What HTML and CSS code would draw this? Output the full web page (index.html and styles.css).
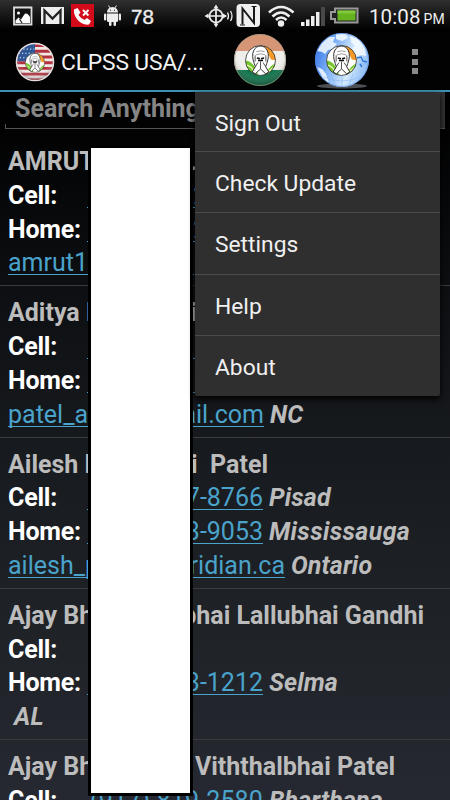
FILE: index.html
```html
<!DOCTYPE html>
<html lang="en">
<head>
<meta charset="utf-8">
<title>CLPSS USA</title>
<link rel="stylesheet" href="styles.css">
</head>
<body>
<svg width="0" height="0" class="defs" aria-hidden="true">
  <defs>
    <clipPath id="disc"><circle cx="30" cy="30" r="26"/></clipPath>
    <clipPath id="inner"><circle cx="15" cy="15" r="14.5"/></clipPath>
    <radialGradient id="gloss" cx=".5" cy=".35" r=".65">
      <stop offset=".65" stop-color="#fff" stop-opacity="0"/><stop offset="1" stop-color="#222" stop-opacity=".4"/>
    </radialGradient>
    <linearGradient id="sea" x1="0" y1=".35" x2="1" y2=".65">
      <stop offset="0" stop-color="#3b78ea"/><stop offset=".3" stop-color="#7db0f6"/><stop offset=".65" stop-color="#d5eafd"/><stop offset="1" stop-color="#86b8f4"/>
    </linearGradient>
    <symbol id="emblem" viewBox="0 0 30 30">
      <g clip-path="url(#inner)">
        <path fill="#fff" d="M0 0h30v30H0z"/>
        <path fill="#f49a28" d="M0 11C3 5 7 1 12 0H0zM18 0h12v15l-5-1z"/>
        <path fill="#74c52f" d="M0 15q9 0 13 15H0zM30 18q-6 1-11 12h11z"/>
        <path d="M0 19q7 1 10 9M30 21q-6 2-9 8" fill="none" stroke="#eaf5b0" stroke-width="1.3"/>
      </g>
      <circle cx="15" cy="15" r="14.5" fill="none" stroke="#333" stroke-width=".8"/>
      <path d="M9 18C5 8 9 1 15 1s10 7 6 17l-1 3 3 5-3 2-4-4-1-1-1 1-4 4-3-2 3-5z" fill="#fff" stroke="#222" stroke-width=".9"/>
      <path d="M10.500 9.500q4.500-2 9 0M11 6.500q4-1.500 8 0" fill="none" stroke="#777" stroke-width=".7"/>
      <path d="M11.500 12.500l3 .8M18.500 12.500l-3 .8M12.500 15h5" fill="none" stroke="#111" stroke-width="1.500"/>
      <path d="M15 16v7M12.500 17l-2.500 4M17.500 17l2.500 4M9.800 10v6M20.200 10v6" fill="none" stroke="#333" stroke-width=".8"/>
    </symbol>
  </defs>
</svg>
<div class="screen">
  <header class="status">
    <svg class="status-left" width="122" height="33" viewBox="0 0 122 33">
      <path d="M14 7.500h17.500v17H14z" fill="#111" stroke="#ddd" stroke-width="1.800"/>
      <circle cx="18.500" cy="13" r="1.500" fill="#fff"/>
      <path d="M15.500 23v-2.500l3-3 2.500 2 3-4.500c2-3 4-1 6 2v6z" fill="#fff"/><path d="M22 23l-2.500-4" stroke="#222" stroke-width="1.200"/>
      <path d="M41 7h23v17H41z" fill="#eee"/><path d="M44.500 24V10.500l8 8 8-8V24" fill="none" stroke="#222" stroke-width="2.300"/>
      <path d="M71 4h23v23H71z" fill="#d20a19"/>
      <path d="M74 9.500l3.500-1.500 3 4.500-2 2.500q2.500 4 6 5l2.500-2 4 3-2 3.500C81 26 73 17 74 9.500z" fill="#fff"/>
      <path d="M83 10l5.500 5.500M88.500 10L83 15.500" stroke="#fff" stroke-width="1.900"/>
      <g fill="#eee"><path d="M107 12.500a5.500 5.500 0 0 1 11 0z"/><path d="M107 13.500h11v7q0 1.500-1.500 1.500h-8q-1.500 0-1.500-1.500z"/><rect x="104" y="13.500" width="2.300" height="7" rx="1.100"/><rect x="118.700" y="13.500" width="2.300" height="7" rx="1.100"/><rect x="109" y="20" width="2.500" height="6" rx="1.200"/><rect x="113.500" y="20" width="2.500" height="6" rx="1.200"/></g>
      <path d="M108.500 5.500l2 3M116.500 5.500l-2 3" stroke="#eee"/><path d="M110 10.200h1M114 10.200h1" stroke="#111"/>
    </svg>
    <span class="count">78</span>
    <svg class="status-right" width="160" height="33" viewBox="204 0 160 33">
      <g fill="none" stroke="#eee" stroke-width="1.700"><circle cx="216" cy="16" r="6.500"/><path d="M206 16h20M216 6v20"/><path d="M227.500 12.500q2 3.500 0 7M230.500 11q3 5 0 10" stroke-width="1.300"/></g>
      <path d="M216 4.500l-2.500 4h5zM216 27.500l-2.500-4h5zM204.500 16l4-2.500v5zM227 16l-4-2.500v5z" fill="#eee"/>
      <rect x="236.500" y="4" width="23.500" height="23" rx="4" fill="#f0f0f0"/>
      <path d="M242.500 24.500V8.500l11.500 14.500V7" fill="none" stroke="#181818" stroke-width="2"/>
      <path d="M240 25h5M251.500 6.500h5" stroke="#181818" stroke-width="1.200"/>
      <g fill="none" stroke="#eee" stroke-width="2.600"><path d="M269 12.500q12-11 24.500 0M272.500 16.500q8.500-8 17 0M276 20q5-5 10.500 0"/></g><circle cx="281" cy="23.500" r="3.200" fill="#eee"/>
      <path d="M301 22h3.500v4H301zM306 19.500h3.500V26H306zM311 16h3.500v10H311zM316 12h3.500v14H316z" fill="#eee"/><path d="M321 7h4v19h-4z" fill="#484848"/>
      <path d="M335 8.500h22.500v14H335v-3.500h-4V12h4z" fill="#222" stroke="#999" stroke-width="2"/><path d="M337.500 10.500h18v10h-18z" fill="#65b31f"/><path d="M337.500 10.500h18v3h-18z" fill="#82c83f"/>
    </svg>
    <span class="clock">10:08<small>PM</small></span>
  </header>

  <div class="actionbar">
    <svg class="logo" width="40" height="40" viewBox="2 2 56 56">
      <g clip-path="url(#disc)"><path fill="#f2e9e7" d="M0 0h60v60H0z"/><path d="M0 7h60M0 15h60M0 23h60M0 31h60M0 39h60M0 47h60M0 55h60" stroke="#b3313e" stroke-width="4"/><path fill="#2f5795" d="M0 0h30v29H0z"/><path d="M9 12h20M7 18h22M4 24h24" stroke="#c4d4ec" stroke-width="1.700" stroke-dasharray="1.700 3"/></g>
      <circle cx="30" cy="30" r="26" fill="url(#gloss)" stroke="#e8dedd" stroke-width="2"/>
      <use href="#emblem" x="16" y="17" width="28" height="28"/>
    </svg>
    <h1 class="app-title">CLPSS USA/...</h1>
    <svg class="badge-india" width="60" height="57" viewBox="0 3 60 57">
      <g clip-path="url(#disc)"><path fill="#d69575" d="M0 0h60v22H0z"/><path fill="#f0eeeb" d="M0 21h60v19H0z"/><path fill="#087046" d="M0 40h60v20H0z"/></g>
      <circle cx="30" cy="30" r="25.500" fill="url(#gloss)" stroke="#a79a86" stroke-opacity=".7"/>
      <use href="#emblem" x="15" y="15" width="31" height="31"/>
    </svg>
    <svg class="badge-globe" width="60" height="57" viewBox="0 3 60 57">
      <ellipse cx="31" cy="56" rx="25" ry="2.500" fill="#4c5054"/>
      <circle cx="31" cy="30" r="27" fill="url(#sea)"/>
      <path d="M6 21l5-8 7-6 6 0-2 5 4 2-5 5-4 1-3 4-3-2zM25 4l10 0 2 4-6 3-6-2zM39 6l9 4 6 9 1 7-5-1-6 2-3-8 3-3-4-4zM6 37l5 2 4 5 3 9-6-5z" fill="#f4faff" opacity=".85"/>
      <path d="M13 47q18 8 36 0M31 46v11M20 44l4 11M42 44l-4 11M46 34h11" fill="none" stroke="#7bb2ee" stroke-opacity=".5"/>
      <path d="M46 28l4-1 2 4 4 1M49 34l2 3" fill="none" stroke="#2f78dc" stroke-width="1.500"/>
      <circle cx="31" cy="30" r="26.500" fill="none" stroke="#5c91e6" stroke-opacity=".7"/>
      <use href="#emblem" x="15" y="15" width="31" height="31"/>
    </svg>
    <div class="overflow"><i></i><i></i><i></i></div>
  </div>

  <main class="content">
    <div class="search"><span>Search Anything</span></div>
    <section class="contact">
      <div class="line name"><span class="split w-dot"><span>AMRUT</span><span>.</span></span></div>
      <div class="line"><b>Cell:</b><a class="phone edge">2</a></div>
      <div class="line"><b>Home:</b><a class="phone edge">2</a></div>
      <div class="line"><a class="split w-covered"><span>amrut1</span></a></div>
    </section>
    <section class="contact">
      <div class="line name"><span class="split w-i"><span>Aditya P</span><span>i</span></span></div>
      <div class="line"><b>Cell:</b><a class="phone"></a></div>
      <div class="line"><b>Home:</b><a class="phone"></a></div>
      <div class="line"><a class="split w-mail"><span>patel_a</span><span>ail.com</span></a><em>NC</em></div>
    </section>
    <section class="contact">
      <div class="line name"><span class="split w-ailesh"><span>Ailesh N</span><span>i&nbsp; Patel</span></span></div>
      <div class="line"><b>Cell:</b><a class="phone">7-8766</a><em>Pisad</em></div>
      <div class="line"><b>Home:</b><a class="phone">3-9053</a><em class="wide">Mississauga</em></div>
      <div class="line"><a class="split w-ca"><span>ailesh_p</span><span>ridian.ca</span></a><em>Ontario</em></div>
    </section>
    <section class="contact">
      <div class="line name"><span class="split w-gandhi"><span>Ajay Bh</span><span>bhai Lallubhai Gandhi</span></span></div>
      <div class="line"><b>Cell:</b></div>
      <div class="line"><b>Home:</b><a class="phone">3-1212</a><em>Selma</em></div>
      <div class="line"><em class="state">AL</em></div>
    </section>
    <section class="contact">
      <div class="line name"><span class="split w-patel"><span>Ajay Bh</span><span>Viththalbhai Patel</span></span></div>
      <div class="line"><b>Cell:</b><a class="phone full">(917) 819-2580</a><em>Bharthana</em></div>
    </section>
  </main>

  <div class="cover"></div>
  <nav class="menu">
    <div>Sign Out</div><div>Check Update</div><div>Settings</div><div>Help</div><div>About</div>
  </nav>
</div>
</body>
</html>
```
FILE: styles.css
```css
* { box-sizing: border-box; }
body { margin: 0; background: #000; }
.defs { position: absolute; }
.screen {
  position: relative;
  width: 450px; height: 800px;
  overflow: hidden;
  display: flex; flex-direction: column;
  font-family: Roboto, "Liberation Sans", sans-serif;
  background: linear-gradient(#000 100px, #0d0f12 290px, #171a1e 450px, #1e2125 600px, #252830 790px);
}
.status {
  flex: none; height: 33px;
  display: flex; align-items: center;
  background: linear-gradient(#303030, #151515 16px, #000 31px);
  color: #eee;
}
.count { width: 82px; padding-left: 9px; font: 400 20.500px "Liberation Sans", sans-serif; -webkit-text-stroke: .4px #eee; }
.clock { margin-left: 5px; font-size: 20.500px; letter-spacing: .1px; white-space: nowrap; }
.clock small { font-size: 14px; margin-left: 3px; }
.actionbar {
  flex: none; height: 59px;
  display: flex; align-items: center;
  background: #020203;
  border-bottom: 2px solid #3b91af;
}
.logo { flex: none; margin: 0 6px 0 15px; }
.app-title { flex: none; width: 169px; margin: 2px 0 0; font-size: 22.800px; letter-spacing: -.15px; font-weight: 400; color: #f2f2f2; white-space: nowrap; }
.badge-india, .badge-globe { flex: none; }
.badge-globe { margin-left: 21px; }
.overflow { margin-left: 41px; display: grid; gap: 3.500px; }
.overflow i { width: 6px; height: 6px; background: #8a8a8a; }
.content { flex: 1; min-height: 0; overflow: hidden; }
.search {
  height: 37px; margin: 0 5px 6px;
  padding: 3px 10px 0;
  border-bottom: 1px solid #555;
  font-size: 25px; line-height: 27px; font-weight: 700; color: #858585;
  background: linear-gradient(#555, #555) left bottom / 1px 4px no-repeat, linear-gradient(#333, #333) right bottom / 5px 37px no-repeat;
}
.contact { height: 151.300px; padding: 10px 8px 0; border-bottom: 1px solid #393b3e; }
.line { height: 33.800px; line-height: 33.800px; display: flex; font-size: 25px; white-space: nowrap; color: #bcbcbc; }
.name, em { font-weight: 700; }
.line b { width: 79px; color: #fff; letter-spacing: -.2px; }
.line em { margin-left: 6px; letter-spacing: .1px; }
.line .wide { letter-spacing: .35px; }
.line .state { margin-left: 6px; }
.line a { color: #4aa3cb; border-bottom: 1.500px solid #4aa3cb; height: 29px; line-height: 33.800px; }
.phone { width: 176px; text-align: right; }
.phone.edge { padding-right: 56px; }
.phone.full { letter-spacing: .15px; }
.split { display: flex; justify-content: space-between; }
.w-dot { width: 189px; }
.w-covered { width: 186px; }
.w-i { width: 189px; }
.w-mail { width: 256px; }
.w-ailesh { width: 260px; }
.w-ca { width: 277px; }
.w-gandhi { width: 416px; }
.w-patel { width: 387px; }
.cover { position: absolute; left: 88px; top: 145px; width: 105px; height: 651px; background: #fff; border: 3px solid #000; }
.menu {
  position: absolute; left: 195px; top: 92px; width: 245px; height: 304px;
  display: grid; grid-template-rows: 60px repeat(3, 61.300px) 60px;
  background: #2f2f2f; color: #f0f0f0;
  border-radius: 0 0 2px 2px;
  box-shadow: 0 3px 6px #000;
  font-size: 22.800px;
}
.menu div { display: flex; align-items: center; padding: 3px 0 0 20px; border-bottom: 1px solid #4b4b4b; }
.menu div:last-child { border-bottom: 0; }
```
